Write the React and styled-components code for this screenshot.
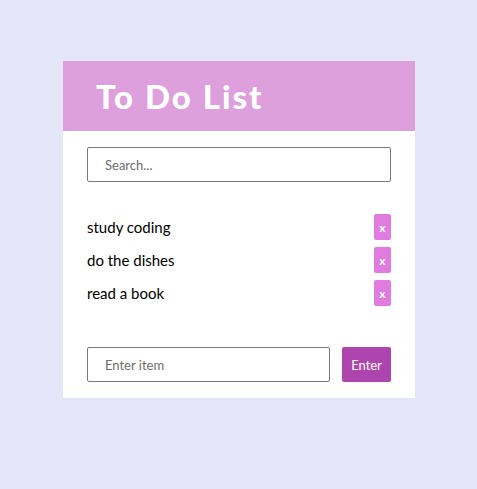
import React, { useState } from 'react';
import styled, { createGlobalStyle } from 'styled-components';

const GlobalStyle = createGlobalStyle`
  body {
    margin: 0;
    background-color: #e6e6fa;
    font-family: "Lato", "Open Sans", sans-serif;
  }
`;

const App = () => {
  const [items] = useState(['study coding', 'do the dishes', 'read a book']);

  return(
    <Page>
      <GlobalStyle />
      <Card>
        <Header>
          <Title>To Do List</Title>
        </Header>
        <Body>
          <Field placeholder='Search...' />
          <List>
            {items.map((item) => (
              <Row key={item}>
                <ItemText>{item}</ItemText>
                <DeleteButton>x</DeleteButton>
              </Row>
            ))}
          </List>
          <AddRow>
            <Field placeholder='Enter item' />
            <EnterButton>Enter</EnterButton>
          </AddRow>
        </Body>
      </Card>
    </Page>
  );
};

const Page = styled.div`
  padding: 61px 0 0 63px;
`;

const Card = styled.div`
  width: 352px;
  background-color: #ffffff;
`;

const Header = styled.div`
  height: 70px;
  background-color: #dda0dd;
  display: flex;
  align-items: center;
  padding-left: 33px;
`;

const Title = styled.h1`
  margin: 0;
  color: #ffffff;
  font-size: 33px;
  font-weight: 900;
  letter-spacing: 2px;
`;

const Body = styled.div`
  padding: 16px 24px 16px 24px;
`;

const Field = styled.input`
  box-sizing: border-box;
  width: 100%;
  height: 35px;
  border: 1px solid #7a7a7a;
  border-radius: 2px;
  padding: 0 17px;
  font-family: "Lato", sans-serif;
  font-size: 13px;
  outline: none;
  &::placeholder {
    color: #6d6d6d;
  }
`;

const List = styled.ul`
  list-style: none;
  margin: 32px 0 41px 0;
  padding: 0;
  display: flex;
  flex-direction: column;
  gap: 7px;
`;

const Row = styled.li`
  display: flex;
  justify-content: space-between;
  align-items: center;
  height: 26px;
`;

const ItemText = styled.span`
  font-size: 15px;
  color: #000000;
`;

const DeleteButton = styled.button`
  width: 17px;
  height: 26px;
  padding: 0;
  border: none;
  border-radius: 2px;
  background-color: #e07be0;
  color: #ffffff;
  font-family: "Lato", sans-serif;
  font-weight: 700;
  font-size: 12px;
  cursor: pointer;
`;

const AddRow = styled.div`
  display: flex;
  gap: 12px;
`;

const EnterButton = styled.button`
  flex: 0 0 49px;
  height: 35px;
  padding: 0;
  border: none;
  border-radius: 2px;
  background-color: #ae45ae;
  color: #ffffff;
  font-family: "Lato", sans-serif;
  font-size: 13px;
  cursor: pointer;
`;

export default App;
